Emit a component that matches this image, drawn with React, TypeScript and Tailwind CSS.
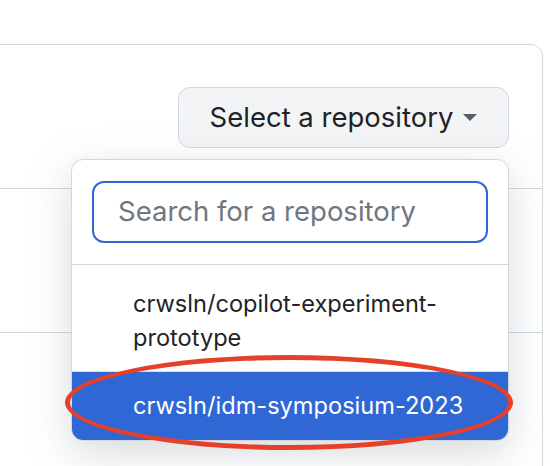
import React from "react";

const font = { fontFamily: "Inter, 'Noto Sans', sans-serif" };

function Caret() {
  return (
    <svg width="14" height="7" viewBox="0 0 14 7" className="ml-[10px] shrink-0">
      <path d="M0 0h14L7 7z" fill="#57606a" />
    </svg>
  );
}

function RepoMenu() {
  return (
    <div className="absolute left-[71px] top-[159px] w-[438px] h-[282px] rounded-[12px] border border-[#d0d7de] bg-white shadow-[0_12px_40px_rgba(140,149,159,0.35)] flex flex-col overflow-hidden">
      {/* Search */}
      <div className="px-[20px] pt-[21px] pb-[21px] border-b border-[#d0d7de]">
        <div className="h-[62px] rounded-[12px] border-2 border-[#2f67d5] flex items-center pl-[24px]">
          <span className="text-[27.5px] text-[#6e7781]">Search for a repository</span>
        </div>
      </div>

      {/* Items */}
      <div className="h-[107px] border-b border-[#d8dee4] pl-[61px] pt-[22px] text-[23.6px] leading-[34px] text-[#1f2328]">
        crwsln/copilot-experiment-
        <br />
        prototype
      </div>
      <div className="flex-1 bg-[#2f67d5] pl-[61px] flex items-center text-[23.6px] text-white">
        crwsln/idm-symposium-2023
      </div>
    </div>
  );
}

export default function App() {
  return (
    <div className="relative w-[550px] h-[466px] bg-white overflow-hidden" style={font}>
      <div className="pt-[44px] pr-[7px]">
        <div className="ml-[-20px] h-[460px] rounded-tr-[12px] border border-[#d0d7de]">
          <div className="h-[144px] border-b border-[#d0d7de] flex justify-end items-start pt-[42px] pr-[33px]">
            <button className="w-[331px] h-[61px] rounded-[12px] border border-[#d0d7de] bg-[#f3f4f6] flex items-center justify-center text-[27.5px] text-[#1f2328]">
              Select a repository
              <Caret />
            </button>
          </div>
          <div className="h-[144px] border-b border-[#d0d7de]" />
        </div>
      </div>

      <RepoMenu />

      {/* annotation */}
      <div className="absolute left-[65px] top-[355px] w-[448px] h-[95px] rounded-[50%] border-[5px] border-[#e5402a] pointer-events-none" />
    </div>
  );
}
